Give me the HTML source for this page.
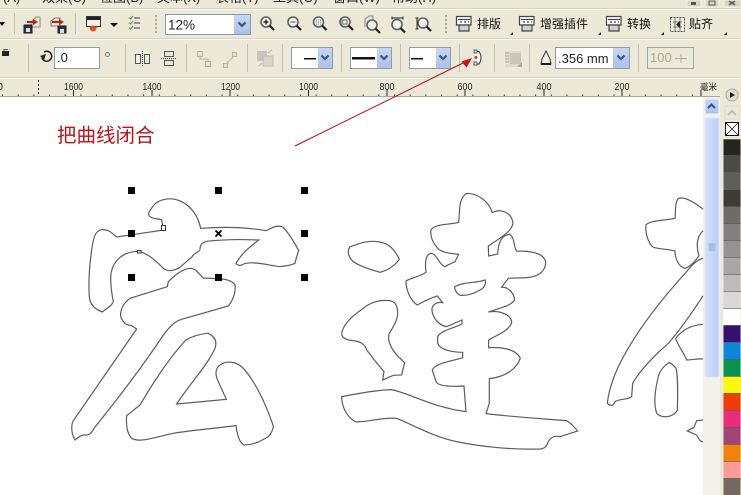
<!DOCTYPE html>
<html><head><meta charset="utf-8"><style>
html,body{margin:0;padding:0;width:741px;height:495px;overflow:hidden;background:#ece9d8}
svg{display:block}
text{font-family:"Liberation Sans","Noto Sans CJK SC",sans-serif}
</style></head><body>
<svg width="741" height="495" viewBox="0 0 741 495" xmlns="http://www.w3.org/2000/svg">
<defs>
<linearGradient id="btn" x1="0" y1="0" x2="0" y2="1"><stop offset="0" stop-color="#c8d6f2"/><stop offset="1" stop-color="#aac2ea"/></linearGradient>
<linearGradient id="thumb" x1="0" y1="0" x2="1" y2="0"><stop offset="0" stop-color="#d6e2fa"/><stop offset="1" stop-color="#b8cdf5"/></linearGradient>
<g id="arw"><path d="M-3.500 -1.500L0 2L3.500 -1.500" fill="none" stroke="#34548c" stroke-width="2.200"/></g>
<g id="mag"><circle cx="0" cy="0" r="5" fill="#eef0ee" stroke="#5e5e5e" stroke-width="1.600"/><path d="M3.500 3.500L8 8" stroke="#222" stroke-width="2.200"/></g>
<g id="plug"><path d="M.5 .5H15V9H.5Z" fill="#fff" stroke="#444" stroke-width="1.200"/><path d="M2 3.500H14" stroke="#444" stroke-width="1.200"/><path d="M4 6H6M8 6H10M12 6H13" stroke="#444" stroke-width="1.200"/><path d="M3 9H13V15H3Z" fill="#cfcfcf" stroke="#444" stroke-width="1.200"/></g>
</defs>
<rect width="741" height="495" fill="#ece9d8"/>
<!-- menu -->
<g font-size="13" fill="#222">
<text x="3" y="2">(A)</text><text x="42" y="2">效果(C)</text><text x="100" y="2">位图(B)</text><text x="157" y="2">文本(X)</text><text x="216" y="2">表格(T)</text><text x="273" y="2">工具(O)</text><text x="333" y="2">窗口(W)</text><text x="392" y="2">帮助(H)</text>
</g>
<rect x="687" y="0" width="14" height="7" fill="#d8d5c6" stroke="#f4f3ec"/><rect x="691" y="2" width="5" height="3" fill="#555"/>
<rect x="705" y="0" width="14" height="7" fill="#d8d5c6" stroke="#f4f3ec"/><rect x="709" y="1" width="6" height="4" fill="none" stroke="#555"/>
<rect x="724" y="0" width="17" height="7" fill="#d8d5c6" stroke="#f4f3ec"/><path d="M729 1L735 5M735 1L729 5" stroke="#555" stroke-width="1.500"/>
<rect y="8" width="741" height="1" fill="#d6d3c2"/><rect y="9" width="741" height="1" fill="#f8f7f0"/>
<rect y="38" width="741" height="1" fill="#d6d3c2"/><rect y="39" width="741" height="1" fill="#f8f7f0"/>
<rect y="77" width="741" height="1" fill="#d6d3c2"/><rect y="78" width="741" height="1" fill="#f8f7f0"/>
<!-- row 1 -->
<path d="M-1 22H5L2 26Z" fill="#111"/>
<g fill="#c2bfae"><rect x="14" y="13" width="1" height="21"/><rect x="75" y="13" width="1" height="21"/></g>
<g>
<path d="M32 21L36 17H40V27H32Z" fill="#f2ecd8" stroke="#888"/>
<path d="M24 25H32V33H24Z" fill="#2a3448" stroke="#1a1a1a"/><rect x="26" y="28" width="4" height="4" fill="#ddd"/>
<path d="M27 22H34" stroke="#c02010" stroke-width="2"/><path d="M33 19L38 22L33 25Z" fill="#c02010"/>
<path d="M51 26V21L55 18H60V26Z" fill="#eee8d8" stroke="#777"/>
<path d="M58 26H66V33H58Z" fill="#2a3448" stroke="#1a1a1a"/><rect x="60" y="29" width="4" height="4" fill="#ddd"/>
<path d="M52 22H60" stroke="#c02010" stroke-width="2"/><path d="M59 19L64 22L59 25Z" fill="#c02010"/>
<rect x="86.500" y="16.500" width="14" height="10" fill="#f4f0e4" stroke="#333"/><rect x="87" y="17" width="13" height="3" fill="#222"/>
<path d="M89 27H98L96 31H91Z" fill="#b9b4a4"/><circle cx="93" cy="28.500" r="3" fill="#e8501c"/>
<path d="M110 23H118L114 27Z" fill="#111"/>
<g fill="none"><path d="M129 17.500L130.500 19L133 16M129 22.500L130.500 24L133 21M129 27.500L130.500 29L133 26" stroke="#6a9a50" stroke-width="1.200"/><path d="M134 18H140M134 23H140M134 28H140" stroke="#777" stroke-width="1.500"/></g>
</g>
<g fill="#a9a695"><rect x="155" y="15" width="2" height="2"/><rect x="155" y="19" width="2" height="2"/><rect x="155" y="23" width="2" height="2"/><rect x="155" y="27" width="2" height="2"/><rect x="155" y="31" width="2" height="2"/></g>
<rect x="165.500" y="14.500" width="85" height="20" fill="#fff" stroke="#7f9db9"/>
<rect x="234" y="15" width="16" height="19" rx="1" fill="url(#btn)"/><use href="#arw" x="242" y="24"/>
<text x="168" y="29.500" font-size="13.500" fill="#222">12%</text>
<use href="#mag" x="266" y="22"/><path d="M263.500 22H268.500M266 19.500V24.500" stroke="#222" stroke-width="1.500"/>
<use href="#mag" x="293" y="22"/><path d="M290.500 22H295.500" stroke="#888" stroke-width="1.500"/>
<use href="#mag" x="318.500" y="22"/><path d="M316 20H321M316 22H321M316 24H321" stroke="#888" stroke-dasharray="1 1"/>
<use href="#mag" x="345" y="22"/><rect x="342" y="20" width="5" height="4" fill="none" stroke="#666"/>
<path d="M365 27V19L369 16H373V21" fill="#e4e4e4" stroke="#888"/><use href="#mag" x="372" y="25"/>
<use href="#mag" x="397" y="24.500"/><path d="M392 18H403M392 16.500V19.500M403 16.500V19.500" stroke="#222"/>
<use href="#mag" x="423" y="23"/><path d="M417 18V29M415.500 18H418.500M415.500 29H418.500" stroke="#222"/>
<g fill="#a9a695"><rect x="445" y="15" width="2" height="2"/><rect x="445" y="19" width="2" height="2"/><rect x="445" y="23" width="2" height="2"/><rect x="445" y="27" width="2" height="2"/><rect x="445" y="31" width="2" height="2"/></g>
<use href="#plug" x="456" y="16"/><use href="#plug" x="519" y="16"/><use href="#plug" x="606" y="16"/>
<rect x="670.500" y="17.500" width="14" height="14" fill="#f0efe4" stroke="#555" stroke-dasharray="2 1"/><path d="M673 22H682M673 27H682M675 18V31M680 18V31" stroke="#777"/><path d="M680 21L676 24.500L680 28Z" fill="#222"/>
<g font-size="12" fill="#111"><text x="477" y="28">排版</text><text x="540" y="28">增强插件</text><text x="627" y="28">转换</text><text x="689" y="28">贴齐</text></g>
<g fill="#222"><path d="M510 35H513V32Z"/><path d="M598 35H601V32Z"/><path d="M661 35H664V32Z"/><path d="M724 35H727V32Z"/></g>
<!-- row 2 -->
<g fill="#c2bfae"><rect x="28" y="44" width="1" height="28"/><rect x="125" y="44" width="1" height="28"/><rect x="186" y="44" width="1" height="28"/><rect x="247" y="44" width="1" height="28"/><rect x="282" y="44" width="1" height="28"/><rect x="341" y="44" width="1" height="28"/><rect x="400" y="44" width="1" height="28"/><rect x="459" y="44" width="1" height="28"/><rect x="494" y="44" width="1" height="28"/><rect x="529" y="44" width="1" height="28"/><rect x="638" y="44" width="1" height="28"/></g>
<path d="M2 56V51H9V56Z" fill="#222"/><path d="M4 51V49.500H8" fill="none" stroke="#555"/>
<path d="M44 52A5 5 0 1 1 42 58" fill="none" stroke="#222" stroke-width="1.500"/><path d="M40 56L46 54L44 60Z" fill="#222"/>
<rect x="54.500" y="47.500" width="45" height="21" fill="#fff" stroke="#8a9da8"/><text x="57" y="62" font-size="13" fill="#222">.0</text>
<circle cx="107.500" cy="54.500" r="2" fill="none" stroke="#777"/>
<g fill="#f0eee2" stroke="#555"><path d="M135.500 54.500H140.500V63.500H135.500Z"/><path d="M144.500 54.500H149.500V63.500H144.500Z"/></g><path d="M142.500 51V66" stroke="#333" stroke-dasharray="1 1"/>
<g fill="#e8e6da" stroke="#555"><rect x="164.500" y="51.500" width="9" height="5"/><rect x="164.500" y="60.500" width="9" height="5"/></g><path d="M161 58.500H176" stroke="#333" stroke-dasharray="1 1"/>
<g fill="#e4e2d4" stroke="#b4b2a4"><rect x="197.500" y="51.500" width="5" height="5"/><rect x="205.500" y="61.500" width="5" height="5"/><rect x="223.500" y="63.500" width="4" height="4"/><rect x="232.500" y="52.500" width="4" height="4"/></g><path d="M200 57V59H208V61M227 63L233 57" stroke="#b4b2a4" fill="none"/>
<rect x="257" y="51" width="10" height="10" fill="#c8c6b8"/><rect x="263" y="56" width="10" height="10" fill="#d8d6c8" stroke="#bbb"/><path d="M268 53L272 50M259 66L262 63" stroke="#b4b2a4"/>
<g>
<rect x="291.500" y="47.500" width="41" height="21" fill="#fff" stroke="#8a9da8"/><rect x="318" y="48" width="14" height="20" rx="1" fill="url(#btn)"/><use href="#arw" x="325" y="57"/><rect x="304" y="58" width="12" height="1.500" fill="#111"/>
<rect x="350.500" y="47.500" width="41" height="21" fill="#fff" stroke="#8a9da8"/><rect x="377" y="48" width="14" height="20" rx="1" fill="url(#btn)"/><use href="#arw" x="384" y="57"/><rect x="352" y="57" width="23" height="2.500" fill="#111"/>
<rect x="409.500" y="47.500" width="41" height="21" fill="#fff" stroke="#8a9da8"/><rect x="436" y="48" width="14" height="20" rx="1" fill="url(#btn)"/><use href="#arw" x="443" y="57"/><rect x="411" y="58" width="12" height="1.500" fill="#111"/>
</g>
<path d="M475 51.500H479Q483 57.500 479 64H475" fill="#fff" stroke="#333"/><rect x="474" y="50" width="3" height="3" fill="#eee" stroke="#333" stroke-width=".8"/><rect x="474" y="62" width="3" height="3" fill="#eee" stroke="#333" stroke-width=".8"/><circle cx="476" cy="57.500" r="1.500" fill="#c83a10"/>
<path d="M505 51H521V67H505Z" fill="#dedccc"/><rect x="510" y="53" width="11" height="11" fill="#c8c6b8"/><path d="M505 53H509M505 56H509M505 59H509M505 62H509" stroke="#aaa"/><path d="M522 67H517L522 62Z" fill="#aaa"/>
<path d="M546 51L542 59L541 64H551L550 59Z" fill="#eee" stroke="#333"/><rect x="541" y="63" width="10" height="2" fill="#222"/>
<rect x="555.500" y="47.500" width="74" height="21" fill="#fff" stroke="#8a9da8"/><rect x="613" y="48" width="16" height="20" rx="1" fill="url(#btn)"/><use href="#arw" x="621" y="57"/><text x="558" y="63" font-size="13" fill="#222">.356 mm</text>
<rect x="647.500" y="47.500" width="46" height="21" fill="#ece9d8" stroke="#9aa8a8"/><text x="650" y="62" font-size="13" fill="#aaa99a">100</text><path d="M681 54V63M675 58.500H687" stroke="#aaa99a"/>
<!-- ruler -->
<g font-size="10.500" fill="#222" text-anchor="middle"><text x="73.500" y="90" textLength="19" lengthAdjust="spacingAndGlyphs">1600</text><text x="152" y="90" textLength="19" lengthAdjust="spacingAndGlyphs">1400</text><text x="230.500" y="90" textLength="19" lengthAdjust="spacingAndGlyphs">1200</text><text x="308.500" y="90" textLength="19" lengthAdjust="spacingAndGlyphs">1000</text><text x="387" y="90" textLength="15" lengthAdjust="spacingAndGlyphs">800</text><text x="465" y="90" textLength="15" lengthAdjust="spacingAndGlyphs">600</text><text x="544" y="90" textLength="15" lengthAdjust="spacingAndGlyphs">400</text><text x="622" y="90" textLength="15" lengthAdjust="spacingAndGlyphs">200</text><text x="0" y="90">0</text></g>
<text x="700" y="90" font-size="8.500" fill="#222">毫米</text>
<path d="M73.500 90V97M152 90V97M230 90V97M308.500 90V97M387 90V97M465 90V97M544 90V97M622 90V97M701 90V97" stroke="#222"/>
<path d="M38.500 80V97" stroke="#222" stroke-dasharray="2 2"/>
<path stroke="#333" stroke-dasharray="1 14.680" d="M2 95.500H700" stroke-width="2"/>
<g fill="#aaa"><rect x="706" y="82" width="1" height="1"/><rect x="709" y="82" width="1" height="1"/></g>
<!-- canvas -->
<rect x="0" y="97" width="703" height="398" fill="#fff"/>
<rect y="96" width="720" height="1" fill="#aca899"/>
<!-- scrollbar -->
<rect x="703" y="97" width="17" height="398" fill="#f3f2ea"/>
<rect x="705" y="99" width="14" height="15" rx="2" fill="url(#btn)" stroke="#e8eefa"/>
<path d="M708 108L711.500 104.500L715 108" fill="none" stroke="#2f4f8a" stroke-width="2"/>
<rect x="705" y="118" width="14" height="259" rx="1" fill="url(#thumb)" stroke="#dfe8fa"/>
<path d="M708.500 244H715.500M708.500 246H715.500M708.500 248H715.500M708.500 250H715.500" stroke="#8aa4d4"/>
<!-- palette -->
<circle cx="732" cy="95" r="6" fill="#e0dfd4" stroke="#aaa"/><path d="M730 92L735 95L730 98Z" fill="#222"/>
<rect x="725" y="106" width="14" height="13" fill="#ece9d8" stroke="#dedcd0"/><path d="M728 115L732 111L736 115" fill="none" stroke="#bbb" stroke-width="2"/>
<rect x="725.500" y="122.500" width="13" height="13" fill="#fff" stroke="#111"/><path d="M726 123L738 135M738 123L726 135" stroke="#222" stroke-width=".8"/>
<g>
<rect x="723.500" y="139.300" width="17" height="16.400" fill="#262420"/>
<rect x="723.500" y="155.700" width="17" height="16.600" fill="#4c4a48"/>
<rect x="723.500" y="172.300" width="17" height="17.700" fill="#5f5e5c"/>
<rect x="723.500" y="190" width="17" height="16.700" fill="#3d3a38"/>
<rect x="723.500" y="206.700" width="17" height="17" fill="#6c6c6a"/>
<rect x="723.500" y="223.700" width="17" height="16.600" fill="#808080"/>
<rect x="723.500" y="240.300" width="17" height="17" fill="#939393"/>
<rect x="723.500" y="257.300" width="17" height="17" fill="#a7a7a7"/>
<rect x="723.500" y="274.300" width="17" height="17" fill="#bcbcbc"/>
<rect x="723.500" y="291.300" width="17" height="17" fill="#d8d8d8"/>
<rect x="723.500" y="308.300" width="17" height="17" fill="#fff"/>
<rect x="723.500" y="325.300" width="17" height="17" fill="#35106e"/>
<rect x="723.500" y="342.300" width="17" height="17" fill="#0a86dc"/>
<rect x="723.500" y="359.300" width="17" height="17" fill="#0a9350"/>
<rect x="723.500" y="376.300" width="17" height="17" fill="#fff80c"/>
<rect x="723.500" y="393.300" width="17" height="17" fill="#ee3c0a"/>
<rect x="723.500" y="410.300" width="17" height="17" fill="#ee2a7a"/>
<rect x="723.500" y="427.300" width="17" height="17" fill="#a0447a"/>
<rect x="723.500" y="444.300" width="17" height="17" fill="#f58208"/>
<rect x="723.500" y="461.300" width="17" height="17" fill="#ff9a9a"/>
<rect x="723.500" y="478.300" width="17" height="17" fill="#75695f"/>
</g>
<path d="M723.500 155.500H741M723.500 172.500H741M723.500 206.500H741M723.500 223.500H741M723.500 240.500H741M723.500 257.500H741M723.500 274.500H741M723.500 291.500H741M723.500 308.500H741M723.500 325.500H741M723.500 342.500H741M723.500 359.500H741M723.500 376.500H741M723.500 393.500H741M723.500 410.500H741M723.500 427.500H741M723.500 444.500H741M723.500 461.500H741M723.500 478.500H741" stroke="#55524e" stroke-opacity=".6"/>
<!-- 宏 -->
<g fill="none" stroke="#5c5c5c" stroke-width="3.600">
<g transform="translate(60 180) scale(.3333)">
<path d="M311 150L170 171C160 165 150 147 125 149C105 152 100 175 95 210C88 260 85 310 88 350C90 375 105 388 127 396C140 385 155 378 160 365C155 340 150 310 153 280C160 240 190 215 235 214C265 220 290 245 310 265C325 278 350 270 365 258C375 248 385 240 395 232C400 220 410 220 420 210C420 195 425 188 440 184C490 178 550 178 596 180C570 200 545 220 528 250C530 255 540 258 545 255C570 240 620 255 660 260C680 258 695 255 705 250C708 235 712 225 716 212C705 190 690 165 670 142C650 132 635 145 618 152C560 142 490 140 422 145C415 110 395 80 365 65C335 50 295 55 278 80C270 92 262 100 268 108C278 118 295 115 305 120Z"/>
<path d="M230 447L40 722C33 735 33 760 45 780C55 772 65 762 80 765C95 765 100 745 110 735C170 660 240 570 300 480C320 450 340 425 365 418L505 378C520 360 528 335 525 315C515 300 495 297 470 296L430 294C418 285 410 265 390 265C365 268 345 285 325 305L322 320L210 355C190 370 180 390 182 410C188 425 195 435 215 437Z"/>
<path d="M444 460C420 462 395 470 378 480C340 520 290 590 240 675L200 707C198 730 200 760 215 775C240 790 290 770 340 760C400 750 470 745 528 737C532 760 535 785 552 795C580 795 600 785 625 770C635 760 640 745 640 738C620 680 590 610 550 565C530 545 500 540 480 555C465 565 465 585 475 605L499 658L350 672C390 610 440 560 465 505C472 485 465 470 444 460Z"/>
</g>
<!-- 達 -->
<g transform="translate(330 180) scale(.3333)">
<path d="M60 200C80 195 100 183 130 184C170 185 190 200 208 238C200 250 185 262 170 270L150 277C125 270 90 260 70 245C55 230 50 215 60 200Z"/>
<path d="M35 460C40 430 70 405 100 385C120 368 150 358 180 362C198 365 203 380 203 400C203 420 190 440 178 460C170 480 185 510 205 530L224 548L215 585L190 586L158 600L162 575C145 555 125 530 110 510C105 495 95 485 70 482C50 480 35 475 35 460Z"/>
<path d="M35 650C90 640 140 630 185 629C240 640 300 680 408 695L402 618C370 620 325 620 318 605L307 570C315 550 360 545 398 533L398 517C370 517 330 510 323 490L323 470C335 450 370 445 396 432L396 420L350 440C320 435 305 405 306 385C310 370 325 365 338 368L322 348C300 355 280 365 262 375C245 365 228 335 228 303C245 293 270 290 288 277C285 250 285 225 302 220C320 220 325 250 343 260L375 245L386 223C360 220 335 218 323 205C310 190 300 170 303 150C315 130 360 135 386 127C390 90 385 55 410 40C440 40 475 60 487 98C510 85 545 95 549 130C545 155 510 175 475 198L476 228L503 222C505 195 510 165 540 163C555 175 550 200 560 213C590 213 640 215 647 245C648 270 630 290 590 293L535 295L515 322C535 320 552 340 554 360C540 380 505 385 475 396C510 390 545 405 545 428C535 455 500 465 476 480L476 503C520 500 560 510 571 535C560 565 530 590 478 596L478 670L468 701C540 710 620 715 710 722C725 730 735 745 743 753L690 770C670 765 660 775 655 785C650 795 650 805 630 807C550 810 450 800 380 785C310 770 260 740 200 715C160 710 100 730 75 725C50 710 35 680 35 650Z"/>
<path d="M375 320C400 305 440 310 465 300C470 310 462 325 450 330C425 345 395 350 385 343C378 335 372 325 375 320Z"/>
</g>
<!-- third char -->
<g transform="translate(590 90) scale(.3333)">
<path d="M339 357C310 335 285 320 265 325C253 340 258 370 255 385C225 392 180 390 168 405C165 430 175 460 190 472C210 478 240 478 255 483C255 505 265 530 285 535C300 530 315 515 327 497C318 470 320 440 339 422"/>
<path d="M339 505C320 510 305 525 290 545C240 600 180 670 130 750C95 805 60 870 52 940C60 948 70 950 75 935C90 925 115 930 125 920L128 880C150 840 200 790 235 760C270 720 305 670 339 617"/>
<path d="M339 703C310 705 280 715 257 745C265 770 280 785 290 810C310 810 325 805 339 807"/>
<path d="M237 818C225 825 210 840 205 860C195 900 190 940 200 970C215 985 245 985 262 962C263 920 265 860 258 835C250 825 245 820 237 818Z"/>
<path d="M339 990L320 992L312 1012L292 1023L320 1035L330 1052L339 1056"/>
</g>
</g>
<!-- handles -->
<g fill="#000"><rect x="128" y="187" width="7" height="7"/><rect x="215" y="187" width="7" height="7"/><rect x="301" y="187" width="7" height="7"/><rect x="128" y="230" width="7" height="7"/><rect x="301" y="230" width="7" height="7"/><rect x="128" y="274" width="7" height="7"/><rect x="215" y="274" width="7" height="7"/><rect x="301" y="274" width="7" height="7"/></g>
<path d="M215.500 230.500L221.500 236.500M221.500 230.500L215.500 236.500" stroke="#000" stroke-width="1.800"/>
<rect x="161.500" y="225.500" width="4" height="5" fill="#fff" stroke="#333"/>
<rect x="137.500" y="250.500" width="3.500" height="2.500" fill="#fff" stroke="#333"/>
<!-- annotation -->
<text x="57" y="142" font-size="19.500" fill="#bc1218" font-family="'Noto Sans CJK SC',sans-serif">把曲线闭合</text>
<path d="M295 146L465 62" stroke="#b8101c" stroke-width="1"/>
<path d="M472 58L461.500 61.500L466.500 67.500Z" fill="#d01018"/>
</svg>
</body></html>
